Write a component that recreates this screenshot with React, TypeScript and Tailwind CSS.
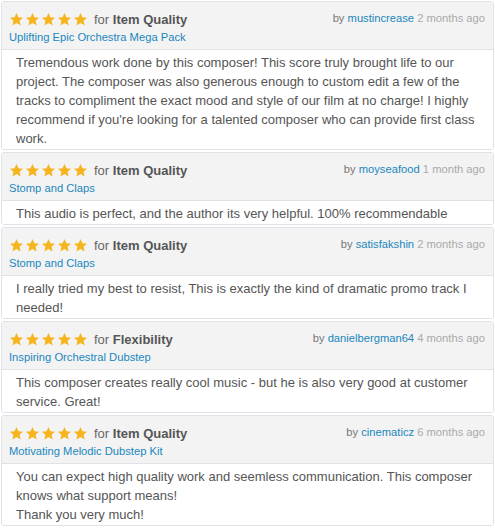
const reviews = [
  {
    aspect: "Item Quality",
    item: "Uplifting Epic Orchestra Mega Pack",
    author: "mustincrease",
    when: "2 months ago",
    body: ["Tremendous work done by this composer! This score truly brought life to our project. The composer was also generous enough to custom edit a few of the tracks to compliment the exact mood and style of our film at no charge! I highly recommend if you're looking for a talented composer who can provide first class work."],
  },
  {
    aspect: "Item Quality",
    item: "Stomp and Claps",
    author: "moyseafood",
    when: "1 month ago",
    body: ["This audio is perfect, and the author its very helpful. 100% recommendable"],
  },
  {
    aspect: "Item Quality",
    item: "Stomp and Claps",
    author: "satisfakshin",
    when: "2 months ago",
    body: ["I really tried my best to resist, This is exactly the kind of dramatic promo track I needed!"],
  },
  {
    aspect: "Flexibility",
    item: "Inspiring Orchestral Dubstep",
    author: "danielbergman64",
    when: "4 months ago",
    body: ["This composer creates really cool music - but he is also very good at customer service. Great!"],
  },
  {
    aspect: "Item Quality",
    item: "Motivating Melodic Dubstep Kit",
    author: "cinematicz",
    when: "6 months ago",
    body: ["You can expect high quality work and seemless communication. This composer knows what support means!", "Thank you very much!"],
  },
];

function Star() {
  return (
    <svg viewBox="0 0 24 24" className="h-[15px] w-[15px]" fill="#f6b51e">
      <path d="M12 1.5l3.1 6.9 7.4.7-5.6 5 1.7 7.4L12 17.6l-6.6 3.9 1.7-7.4-5.6-5 7.4-.7z" />
    </svg>
  );
}

export default function App() {
  return (
    <div className="flex w-[495px] flex-col gap-[2px] bg-white pt-[1px] font-['Liberation_Sans',Arial,sans-serif]">
      {reviews.map((r) => (
        <div key={r.author} className="mx-[1px] overflow-hidden rounded-[3px] border border-[#dfe3e8]">
          <div className="flex h-[48px] justify-between border-b border-[#dfe3e8] bg-[#f3f3f3] pl-[7px] pr-[8px] pt-[9px]">
            <div>
              <div className="flex items-center">
                <div className="flex gap-[1px]">
                  <Star />
                  <Star />
                  <Star />
                  <Star />
                  <Star />
                </div>
                <span className="ml-[6px] text-[13px] leading-[17px] text-[#666]">
                  for <b className="text-[#555]">{r.aspect}</b>
                </span>
              </div>
              <div className="mt-[2px] text-[11.2px] leading-[15px] text-[#1a87bd]">{r.item}</div>
            </div>
            <div className="text-[11.2px] leading-[15px] text-[#777]">
              by <span className="text-[#1a87bd]">{r.author}</span>{" "}
              <span className="text-[#aaa]">{r.when}</span>
            </div>
          </div>
          <div className="bg-white px-[14px] pb-[1px] pt-[3px] text-[13px] leading-[19px] text-[#555]">
            {r.body.map((t) => (
              <p key={t}>{t}</p>
            ))}
          </div>
        </div>
      ))}
    </div>
  );
}
